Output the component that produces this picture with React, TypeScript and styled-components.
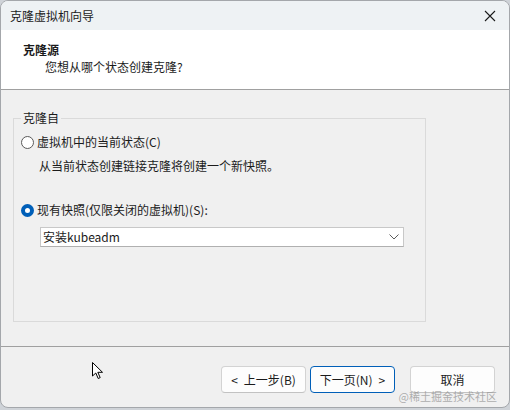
import React from "react";
import styled, { createGlobalStyle } from "styled-components";

const Global = createGlobalStyle`
  html, body { margin: 0; padding: 0; background: #cfd3d8; }
  body { font-family: "Noto Sans CJK SC", "Noto Sans", sans-serif; font-size: 12px; color: #1b1b1b; }
  * { box-sizing: border-box; }
`;

const Window = styled.div`
  position: relative;
  width: 510px;
  height: 408px;
  border: 1px solid #a4a7ab;
  border-radius: 8px;
  overflow: hidden;
  background: #f0f0f0;
  display: flex;
  flex-direction: column;
`;

const TitleBar = styled.div`
  height: 29px;
  flex: none;
  background: #eef2f4;
  display: flex;
  align-items: center;
  justify-content: space-between;
  padding: 0 10px 0 9px;
  font-size: 12px;
  line-height: 16px;
`;

const CloseBtn = styled.div`
  width: 12px;
  height: 12px;
  display: flex;
  margin-right: 3px;
`;

const Header = styled.div`
  height: 60px;
  flex: none;
  background: #ffffff;
  border-bottom: 1px solid #a0a0a0;
  padding: 12px 0 0 22px;
  display: flex;
  flex-direction: column;
  gap: 1px;
`;

const HeaderTitle = styled.div`
  font-weight: bold;
  line-height: 16px;
`;

const HeaderSub = styled.div`
  line-height: 16px;
  padding-left: 22px;
`;

const Body = styled.div`
  height: 257px;
  flex: none;
  border-bottom: 1px solid #a0a0a0;
  padding: 20px 0 0 12px;
`;

const GroupBox = styled.fieldset`
  margin: 0;
  width: 413px;
  height: 212px;
  border: 1px solid #dadada;
  border-radius: 0;
  padding: 0 0 0 7px;
`;

const Legend = styled.legend`
  padding: 0 2px;
  margin-left: 0;
  line-height: 16px;
  font-size: 12px;
`;

const RadioRow = styled.label<{ $top: number }>`
  display: flex;
  align-items: center;
  gap: 3px;
  height: 16px;
  line-height: 16px;
  margin-top: ${(p) => p.$top}px;
`;

const RadioCircle = styled.span<{ $checked?: boolean }>`
  width: 13px;
  height: 13px;
  border-radius: 50%;
  flex: none;
  border: ${(p) => (p.$checked ? "4px solid #005fb8" : "1px solid #5a5a5a")};
  background: #ffffff;
`;

const Description = styled.div`
  margin-top: 8px;
  padding-left: 18px;
  line-height: 16px;
`;

const Combo = styled.div`
  margin: 9px 0 0 19px;
  width: 364px;
  height: 20px;
  background: #ffffff;
  border: 1px solid #c8c8c8;
  border-bottom-color: #b0b0b0;
  display: flex;
  align-items: center;
  justify-content: space-between;
  padding: 0 4px 0 2px;
  line-height: 16px;
`;

const Footer = styled.div`
  flex: 1;
  display: flex;
  justify-content: flex-end;
  align-items: flex-start;
  padding: 19px 14px 0 0;
  gap: 4px;
`;

const Button = styled.div<{ $primary?: boolean; $gapBefore?: number }>`
  width: 85px;
  height: 27px;
  background: #fdfdfd;
  border: 1px solid ${(p) => (p.$primary ? "#005fb8" : "#d3d3d3")};
  border-bottom-color: ${(p) => (p.$primary ? "#005fb8" : "#c2c2c2")};
  border-radius: 4px;
  display: flex;
  align-items: center;
  justify-content: center;
  gap: 6px;
  line-height: 16px;
  margin-left: ${(p) => p.$gapBefore ?? 0}px;
`;

const Watermark = styled.div`
  position: absolute;
  right: 12px;
  bottom: 4px;
  font-size: 11px;
  line-height: 13px;
  color: rgba(150, 150, 150, 0.75);
`;

const Cursor = styled.svg`
  position: absolute;
  left: 91px;
  top: 361px;
`;

export default function App() {
  return (
    <>
      <Global />
      <Window>
        <TitleBar>
          <span>克隆虚拟机向导</span>
          <CloseBtn>
            <svg width="12" height="12" viewBox="0 0 12 12">
              <path d="M1 1 L11 11 M11 1 L1 11" stroke="#1b1b1b" strokeWidth="1.1" />
            </svg>
          </CloseBtn>
        </TitleBar>
        <Header>
          <HeaderTitle>克隆源</HeaderTitle>
          <HeaderSub>您想从哪个状态创建克隆?</HeaderSub>
        </Header>
        <Body>
          <GroupBox>
            <Legend>克隆自</Legend>
            <RadioRow $top={8}>
              <RadioCircle />
              <span>虚拟机中的当前状态(C)</span>
            </RadioRow>
            <Description>从当前状态创建链接克隆将创建一个新快照。</Description>
            <RadioRow $top={28}>
              <RadioCircle $checked />
              <span>现有快照(仅限关闭的虚拟机)(S):</span>
            </RadioRow>
            <Combo>
              <span>安装kubeadm</span>
              <svg width="10" height="6" viewBox="0 0 10 6">
                <path d="M0.5 0.5 L5 5 L9.5 0.5" fill="none" stroke="#5c5c5c" strokeWidth="1" />
              </svg>
            </Combo>
          </GroupBox>
        </Body>
        <Footer>
          <Button>
            <span>&lt;</span>
            <span>上一步(B)</span>
          </Button>
          <Button $primary>
            <span>下一页(N)</span>
            <span>&gt;</span>
          </Button>
          <Button $gapBefore={11}>取消</Button>
        </Footer>
        <Watermark>@稀土掘金技术社区</Watermark>
        <Cursor width="12" height="18" viewBox="0 0 12 18">
          <path d="M0.5 0.5 L0.5 14 L3.8 11 L6.2 16.5 L8.2 15.6 L5.8 10.3 L10.5 10.3 Z" fill="#ffffff" stroke="#000000" strokeWidth="1" strokeLinejoin="round" />
        </Cursor>
      </Window>
    </>
  );
}
